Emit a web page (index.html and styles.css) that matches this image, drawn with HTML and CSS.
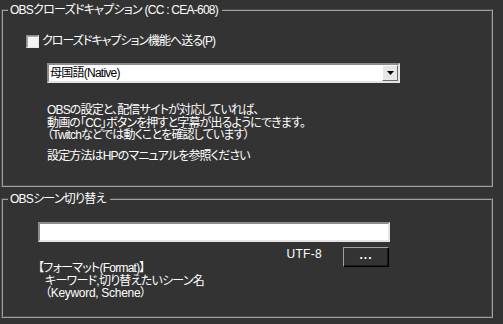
FILE: index.html
```html
<!DOCTYPE html>
<html lang="ja">
<head>
<meta charset="utf-8">
<title>OBS</title>
<link rel="stylesheet" href="styles.css">
</head>
<body>
<div class="page">
  <section class="group group-cc">
    <div class="legend">OBSクローズドキャプション (CC : CEA-608)</div>
    <label class="check-row">
      <span class="checkbox"></span>
      <span class="check-label">クローズドキャプション機能へ送る(P)</span>
    </label>
    <div class="select">
      <span class="select-text">母国語(Native)</span>
      <span class="select-btn">
        <svg width="7" height="4" viewBox="0 0 7 4"><polygon points="0,0 7,0 3.5,4" fill="#000"/></svg>
      </span>
    </div>
    <div class="note">
      <p>OBSの設定と、配信サイトが対応していれば、<br>動画の「CC」ボタンを押すと字幕が出るようにできます。<br>（Twitchなどでは動くことを確認しています）</p>
      <p class="howto">設定方法はHPのマニュアルを参照ください</p>
    </div>
  </section>
  <section class="group group-scene">
    <div class="legend">OBSシーン切り替え</div>
    <div class="text-input"></div>
    <div class="enc-row">
      <span class="enc">UTF-8</span>
      <span class="btn">...</span>
    </div>
    <div class="format">
      <div>【フォーマット(Format)】</div>
      <div class="indent">キーワード,切り替えたいシーン名</div>
      <div class="indent latin">（Keyword, Schene）</div>
    </div>
  </section>
</div>
</body>
</html>
```

FILE: styles.css
```css
* { box-sizing: border-box; }
html, body { margin: 0; }
body {
  background: #333333;
  color: #ffffff;
  font-family: "Liberation Sans", "Noto Sans CJK JP", sans-serif;
  font-size: 12px;
  line-height: 14px;
  letter-spacing: -0.75px;
  font-feature-settings: "palt";
  width: 503px;
  height: 324px;
  overflow: hidden;
}
.page {
  padding: 9px 0 0 1px;
  display: flex;
  flex-direction: column;
  gap: 11px;
}
.group {
  position: relative;
  width: 492px;
  border: 2px groove #a0a0a0;
  display: flex;
  flex-direction: column;
  align-items: flex-start;
}
.group-cc { height: 178px; }
.group-scene { height: 120px; }
.legend {
  position: absolute;
  left: 5px;
  top: -8px;
  padding: 0 4px 0 2px;
  background: #333333;
  line-height: 14px;
  white-space: nowrap;
}
.check-row {
  display: flex;
  align-items: center;
  gap: 3px;
  margin: 23px 0 0 23px;
  height: 14px;
}
.check-label { letter-spacing: -1px; }
.checkbox {
  width: 13px;
  height: 13px;
  background: #f4f4f4;
  border: 1px solid;
  border-color: #8a8a8a #e8e8e8 #e8e8e8 #8a8a8a;
  box-shadow: inset 1px 1px 0 #a8a8a8;
}
.select {
  margin: 15px 0 0 44px;
  width: 353px;
  height: 20px;
  background: #ffffff;
  color: #000000;
  border: 2px solid;
  border-color: #8c8c8c #e4e4e4 #e4e4e4 #8c8c8c;
  display: flex;
  align-items: center;
  justify-content: space-between;
  padding-left: 1px;
}
.select-btn {
  width: 16px;
  height: 16px;
  background: #e6e6e6;
  border: 1px solid;
  border-color: #ffffff #6a6a6a #6a6a6a #ffffff;
  display: flex;
  align-items: center;
  justify-content: center;
}
.select-btn svg { display: block; }
.note {
  margin: 21px 0 0 44px;
  line-height: 12.5px;
  letter-spacing: -0.85px;
}
.note p { margin: 0; }
.note .howto { margin-top: 8px; }
.text-input {
  margin: 22px 0 0 35px;
  width: 352px;
  height: 20px;
  background: #ffffff;
  border: 2px solid;
  border-color: #8c8c8c #e4e4e4 #e4e4e4 #8c8c8c;
}
.enc-row {
  margin: 5px 0 0 35px;
  width: 352px;
  display: flex;
  justify-content: flex-end;
  align-items: flex-start;
  gap: 21px;
  padding-right: 1px;
}
.enc { letter-spacing: 0.3px; }
.btn {
  width: 46px;
  height: 20px;
  background: #333333;
  border: 1px solid;
  border-color: #a0a0a0 #000000 #000000 #a0a0a0;
  box-shadow: inset -1px -1px 0 #1a1a1a;
  display: flex;
  align-items: center;
  justify-content: center;
  font-weight: bold;
  letter-spacing: 1px;
  line-height: 12px;
  padding-bottom: 4px;
}
.format {
  margin: -5px 0 0 35px;
  line-height: 12.5px;
}
.format .indent { padding-left: 7px; }
.format .latin { letter-spacing: -0.3px; }
```
